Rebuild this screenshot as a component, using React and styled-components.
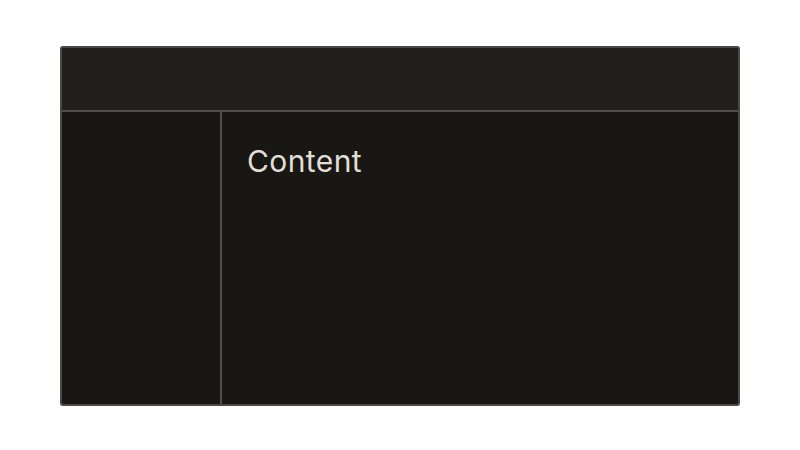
import React from 'react';
import styled, { createGlobalStyle } from 'styled-components';

const GlobalStyle = createGlobalStyle`
  html, body {
    margin: 0;
    padding: 0;
    background: #ffffff;
  }
  body {
    font-family: Inter, "Noto Sans", sans-serif;
  }
`;

const Page = styled.div`
  width: 800px;
  height: 450px;
  padding: 46px 60px 44px 60px;
  box-sizing: border-box;
`;

const Frame = styled.div`
  display: flex;
  flex-direction: column;
  height: 100%;
  border: 2px solid #4a4946;
  border-radius: 3px;
  background: #181713;
  overflow: hidden;
  box-sizing: border-box;
`;

const Header = styled.header`
  flex: 0 0 62px;
  background: #201f1b;
  border-bottom: 2px solid #4f4e4b;
`;

const Body = styled.div`
  flex: 1;
  display: flex;
  min-height: 0;
`;

const Sidebar = styled.aside`
  flex: 0 0 158px;
  border-right: 2px solid #4f4e4b;
`;

const Main = styled.main`
  flex: 1;
  padding: 32px 25px;
  color: #e2dfd8;
  font-size: 30px;
  line-height: 34px;
  letter-spacing: 0.4px;
`;

export default function App() {
  return (
    <>
      <GlobalStyle />
      <Page>
        <Frame>
          <Header />
          <Body>
            <Sidebar />
            <Main>Content</Main>
          </Body>
        </Frame>
      </Page>
    </>
  );
}
